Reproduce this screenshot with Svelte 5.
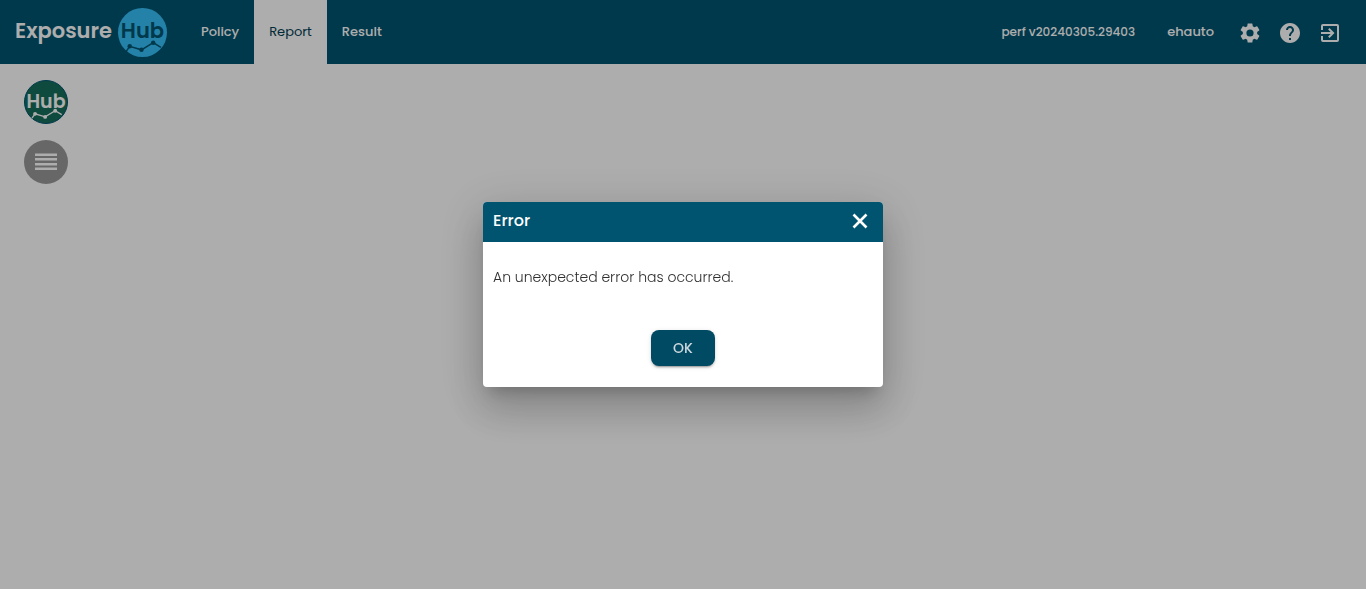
<script>
  let open = $state(true);
  let current = $state('Report');
  const tabs = ['Policy', 'Report', 'Result'];
  const close = () => (open = false);
</script>

{#snippet trend()}
  <svg class="trend" viewBox="0 0 48 48" aria-hidden="true">
    <path d="M8 42.500 11.500 37.500 23 41 34.500 34 42 38.500" fill="none" stroke="currentColor" stroke-width="1.500" />
    <circle cx="11.500" cy="37.500" r="2.200" fill="currentColor" />
    <circle cx="23" cy="41" r="2.200" fill="currentColor" />
    <circle cx="34.500" cy="34" r="2.200" fill="currentColor" />
  </svg>
{/snippet}

<div class="page">
  <header>
    <a class="brand" href="#home">
      <span class="name">Exposure</span>
      <span class="hub">Hub{@render trend()}</span>
    </a>
    <nav>
      {#each tabs as tab}
        <button class="tab" class:active={tab === current} onclick={() => (current = tab)}>{tab}</button>
      {/each}
    </nav>
    <div class="account">
      <span class="version">perf v20240305.29403</span>
      <span class="user">ehauto</span>
      <button class="icon" aria-label="Settings">
        <svg viewBox="0 0 24 24"><path d="M19.140 12.940c.04-.3.06-.61.06-.94 0-.32-.02-.64-.07-.94l2.030-1.580a.49.49 0 0 0 .12-.61l-1.920-3.320a.488.488 0 0 0-.59-.22l-2.390.96c-.5-.38-1.030-.7-1.620-.94l-.36-2.540a.484.484 0 0 0-.48-.41h-3.840c-.24 0-.43.17-.47.41l-.36 2.540c-.59.24-1.130.57-1.620.94l-2.390-.96c-.22-.08-.47 0-.59.22L2.740 8.870c-.12.21-.08.47.12.61l2.030 1.580c-.05.3-.09.63-.09.94s.02.64.07.94l-2.030 1.580a.49.49 0 0 0-.12.61l1.920 3.320c.12.22.37.29.59.22l2.390-.96c.5.38 1.030.7 1.620.94l.36 2.540c.05.24.24.41.48.41h3.840c.24 0 .44-.17.47-.41l.36-2.540c.59-.24 1.130-.56 1.620-.94l2.390.96c.22.08.47 0 .59-.22l1.920-3.320c.12-.22.07-.47-.12-.61zM12 15.600A3.600 3.600 0 1 1 12 8.400a3.600 3.600 0 0 1 0 7.200z" /></svg>
      </button>
      <button class="icon" aria-label="Help">
        <svg viewBox="0 0 24 24"><path d="M12 2C6.480 2 2 6.480 2 12s4.480 10 10 10 10-4.480 10-10S17.520 2 12 2zm1 17h-2v-2h2v2zm2.070-7.750-.9.920C13.450 12.900 13 13.500 13 15h-2v-.5c0-1.100.45-2.100 1.170-2.830l1.240-1.260c.37-.36.59-.86.59-1.410 0-1.100-.9-2-2-2s-2 .9-2 2H8c0-2.210 1.790-4 4-4s4 1.790 4 4c0 .88-.36 1.680-.93 2.250z" /></svg>
      </button>
      <button class="icon" aria-label="Log out">
        <svg viewBox="0 0 24 24"><path d="M5 3a2 2 0 0 0-2 2v4h2V5h14v14H5v-4H3v4a2 2 0 0 0 2 2h14a2 2 0 0 0 2-2V5a2 2 0 0 0-2-2zM11.500 7 10.090 8.410 12.670 11H3v2h9.670l-2.580 2.590L11.500 17l5-5z" /></svg>
      </button>
    </div>
  </header>

  <main>
    <button class="round green hub">Hub{@render trend()}</button>
    <button class="round" aria-label="List">
      <svg viewBox="0 0 24 24"><path d="M1 3.500h22V6H1zM1 8h22v2.500H1zM1 13h22v2.500H1zM1 17.500h22V20H1z" /></svg>
    </button>
  </main>
</div>

{#if open}
  <div class="backdrop">
    <div class="dialog" role="dialog" aria-modal="true" aria-labelledby="dialog-title">
      <div class="title">
        <h2 id="dialog-title">Error</h2>
        <button class="icon" aria-label="Close" onclick={close}>
          <svg viewBox="0 0 24 24"><path d="M5.500 5.500l13 13M18.500 5.500l-13 13" stroke="currentColor" stroke-width="2.600" /></svg>
        </button>
      </div>
      <p>An unexpected error has occurred.</p>
      <button class="ok" onclick={close}>OK</button>
    </div>
  </div>
{/if}

<style>
  :global(body) {
    margin: 0;
    background: #fff;
    font-family: Poppins, Inter, sans-serif;
    font-size: 14px;
  }

  button {
    border: 0;
    padding: 0;
    background: none;
    color: inherit;
    font: inherit;
    cursor: pointer;
  }

  .page {
    min-height: 100vh;
  }

  header {
    display: flex;
    height: 64px;
    background: #005470;
    color: #fff;
    font-size: 13px;
    font-weight: 500;
  }

  .brand {
    display: flex;
    align-items: center;
    gap: 6px;
    padding: 0 19px 0 15px;
    color: inherit;
    font-size: 21px;
    font-weight: 600;
    text-decoration: none;
  }

  .name {
    padding-bottom: 4px;
  }

  .hub {
    position: relative;
    text-align: center;
    font-weight: 600;
  }

  .brand .hub {
    width: 49px;
    height: 49px;
    border-radius: 50%;
    background: #35c0fa;
    color: #005470;
    line-height: 46px;
  }

  .trend {
    position: absolute;
    inset: 0;
    width: 100%;
    height: 100%;
  }

  nav {
    display: flex;
  }

  .tab {
    padding: 0 15px;
  }

  .tab.active {
    background: #fff;
    color: #004054;
    font-weight: 400;
  }

  .account {
    display: flex;
    align-items: center;
    margin-left: auto;
    padding-right: 24px;
  }

  .version {
    margin-right: 32px;
    font-size: 12px;
  }

  .user {
    margin-right: 24px;
  }

  .icon {
    display: flex;
  }

  .icon svg {
    width: 24px;
    height: 24px;
    fill: currentColor;
  }

  .account .icon {
    padding-top: 2px;
  }

  .account .icon + .icon {
    margin-left: 16px;
  }

  main {
    display: flex;
    flex-direction: column;
    gap: 16px;
    padding: 16px 24px;
  }

  .round {
    display: flex;
    align-items: center;
    justify-content: center;
    width: 44px;
    height: 44px;
    border-radius: 50%;
    background: #999;
    color: #fff;
  }

  .round > svg:not(.trend) {
    width: 24px;
    height: 24px;
    fill: currentColor;
  }

  .green {
    box-sizing: border-box;
    border: 1px solid #005470;
    padding-bottom: 2px;
    background: #156e5b;
    font-size: 19px;
  }

  .backdrop {
    position: fixed;
    inset: 0;
    display: flex;
    align-items: center;
    justify-content: center;
    background: rgba(0, 0, 0, 0.32);
  }

  .dialog {
    display: flex;
    flex-direction: column;
    width: 400px;
    max-width: 80vw;
    overflow: hidden;
    border-radius: 4px;
    background: #fff;
    box-shadow:
      0 11px 15px -7px rgba(0, 0, 0, 0.2),
      0 24px 38px 3px rgba(0, 0, 0, 0.14),
      0 9px 46px 8px rgba(0, 0, 0, 0.12);
  }

  .title {
    display: flex;
    align-items: center;
    justify-content: space-between;
    padding: 7px 11px 9px 10px;
    background: #005470;
    color: #fff;
  }

  h2 {
    margin: 0;
    font-size: 16px;
    font-weight: 500;
    line-height: 24px;
  }

  p {
    margin: 24px 10px 42px;
    color: #303030;
    font-weight: 300;
    line-height: 22px;
  }

  .ok {
    align-self: center;
    width: 64px;
    margin-bottom: 21px;
    border-radius: 8px;
    background: #004a63;
    color: #ccd8dd;
    font-weight: 500;
    line-height: 36px;
    box-shadow:
      0 3px 1px -2px rgba(0, 0, 0, 0.2),
      0 2px 2px 0 rgba(0, 0, 0, 0.14),
      0 1px 5px 0 rgba(0, 0, 0, 0.12);
  }
</style>
